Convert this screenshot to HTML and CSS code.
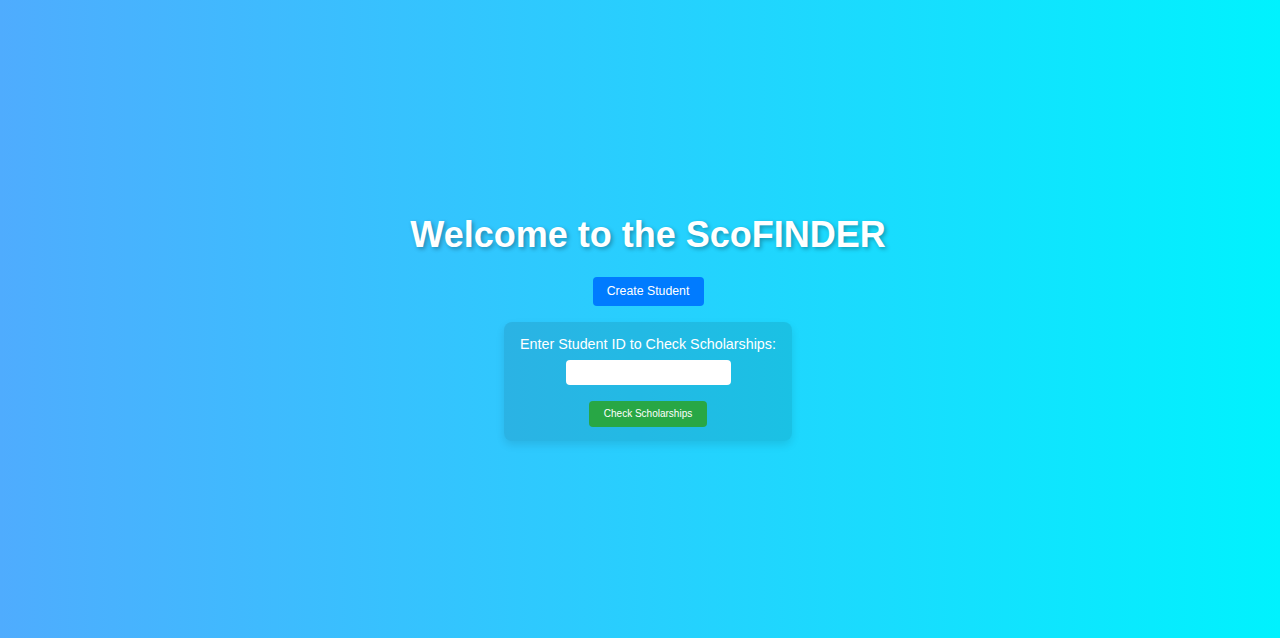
FILE: index.html
```html
<!DOCTYPE html>
<html>
<head>
<meta charset="utf-8">
<link rel="stylesheet" href="styles.css">
</head>
<body>
<main class="page">
  <h1 class="title">Welcome to the ScoFINDER</h1>
  <button class="btn btn-create">Create Student</button>
  <div class="card">
    <label class="card-label" for="sid">Enter Student ID to Check Scholarships:</label>
    <input class="card-input" id="sid" type="text">
    <button class="btn btn-check">Check Scholarships</button>
  </div>
</main>
</body>
</html>
```
FILE: styles.css
```css
html, body {
  margin: 0;
  padding: 0;
  height: 100%;
}
body {
  background: linear-gradient(to right, #4facfe 0%, #00f2fe 100%);
  font-family: "Liberation Sans", Arial, sans-serif;
  color: #fff;
}
.page {
  box-sizing: border-box;
  height: 638px;
  padding: 16px 0 0 16px;
  display: flex;
  flex-direction: column;
  align-items: center;
  justify-content: center;
}
.title {
  margin: 0 0 21px;
  font-size: 36px;
  font-weight: bold;
  text-shadow: 2px 2px 4px rgba(0,0,0,0.3);
}
.btn {
  border: none;
  border-radius: 4px;
  color: #fff;
  font-family: "Liberation Sans", Arial, sans-serif;
  cursor: pointer;
}
.btn-create {
  background: #007bff;
  font-size: 12.3px;
  width: 111px;
  height: 29px;
  padding: 0;
}
.card {
  margin-top: 16px;
  width: 288px;
  box-sizing: border-box;
  padding: 13px 0 14px;
  background: rgba(0, 0, 0, 0.1);
  border-radius: 8px;
  box-shadow: 0 4px 8px rgba(0,0,0,0.1);
  display: flex;
  flex-direction: column;
  align-items: center;
}
.card-label {
  font-size: 14.3px;
  line-height: 18px;
}
.card-input {
  margin-top: 7px;
  width: 165px;
  height: 25px;
  box-sizing: border-box;
  border: none;
  border-radius: 4px;
  background: #fff;
}
.btn-check {
  margin-top: 16px;
  background: #28a745;
  font-size: 10px;
  width: 118px;
  height: 26px;
  padding: 0;
}
```
